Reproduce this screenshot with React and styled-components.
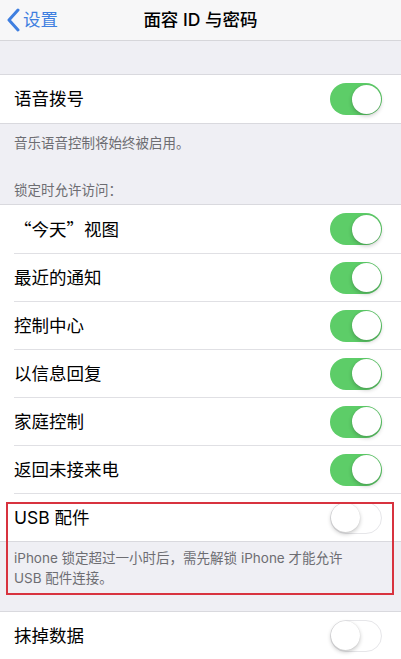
import styled, { createGlobalStyle } from "styled-components";

const GlobalStyle = createGlobalStyle`
  html, body {
    margin: 0;
    padding: 0;
    background: #efeff4;
  }
  body {
    font-family: "Inter", "Noto Sans CJK SC", sans-serif;
    -webkit-font-smoothing: antialiased;
  }
`;

const Page = styled.div`
  width: 401px;
  min-height: 659px;
  background: #efeff4;
  overflow: hidden;
`;

const NavBar = styled.div`
  height: 41px;
  background: #f7f7f8;
  border-bottom: 1px solid #d6d6da;
  display: grid;
  grid-template-columns: 80px 1fr 80px;
  align-items: center;
  box-sizing: border-box;
`;

const Back = styled.div`
  display: flex;
  align-items: center;
  gap: 3px;
  padding-left: 6px;
  color: #3f7fe0;
  font-size: 17.5px;
  line-height: 1;
`;

const Title = styled.div`
  text-align: center;
  font-size: 17.5px;
  font-weight: 500;
  color: #000;
  line-height: 1;
`;

const Spacer = styled.div`
  height: ${(p) => p.$h}px;
`;

const Group = styled.div`
  background: #fff;
  border-top: ${(p) => (p.$noTop ? "none" : "1px solid #d9d9de")};
  border-bottom: ${(p) => (p.$noBottom ? "none" : "1px solid #d9d9de")};
`;

const Row = styled.div`
  height: 48px;
  display: flex;
  align-items: center;
  justify-content: space-between;
  margin-left: 14px;
  padding-right: 19px;
  box-sizing: border-box;
  border-top: ${(p) => (p.$first ? "none" : "1px solid #e0e0e4")};
`;

/* CJK quote marks should stay full width, so those labels use Noto first */
const Label = styled.span`
  font-family: ${(p) =>
    p.$cjk ? '"Noto Sans CJK SC", sans-serif' : '"Inter", "Noto Sans CJK SC", sans-serif'};
  font-size: 17.5px;
  color: #000;
  line-height: 1;
`;

const Note = styled.div`
  padding: ${(p) => p.$pad || "9px 14px 0"};
  font-size: 13.5px;
  line-height: 20px;
  color: #6d6d72;
`;

const Header = styled.div`
  padding: 0 14px 4px;
  font-size: 13.5px;
  line-height: 20px;
  color: #6d6d72;
`;

const Track = styled.div`
  position: relative;
  width: 52px;
  height: 32px;
  border-radius: 16px;
  box-sizing: border-box;
  background: ${(p) => (p.$on ? "#5dcd68" : "#fff")};
  border: ${(p) => (p.$on ? "none" : "1.5px solid #e6e6e9")};
`;

const Knob = styled.div`
  position: absolute;
  top: ${(p) => (p.$on ? "1.5px" : "0")};
  left: ${(p) => (p.$on ? "21.5px" : "0")};
  width: 29px;
  height: 29px;
  border-radius: 50%;
  background: #fff;
  box-shadow: 0 2px 4px rgba(0, 0, 0, 0.22), 0 0 1px rgba(0, 0, 0, 0.15);
`;

/* red annotation frame drawn over the USB row and its note */
const Marked = styled.div`
  position: relative;
  &::after {
    content: "";
    position: absolute;
    left: 6px;
    right: 7px;
    top: 9px;
    bottom: 0;
    border: 2px solid #d8333f;
    pointer-events: none;
  }
`;

function Toggle({ on }) {
  return (
    <Track $on={on}>
      <Knob $on={on} />
    </Track>
  );
}

const lockItems = [
  "“今天”视图",
  "最近的通知",
  "控制中心",
  "以信息回复",
  "家庭控制",
  "返回未接来电",
];

export default function App() {
  return (
    <Page>
      <GlobalStyle />
      <NavBar>
        <Back>
          <svg width="14" height="24" viewBox="0 0 14 24">
            <path
              d="M12 2 L3 12 L12 22"
              fill="none"
              stroke="#3f7fe0"
              strokeWidth="3"
              strokeLinecap="round"
              strokeLinejoin="round"
            />
          </svg>
          设置
        </Back>
        <Title>面容 ID 与密码</Title>
        <div />
      </NavBar>

      <Spacer $h={33} />
      <Group>
        <Row $first>
          <Label>语音拨号</Label>
          <Toggle on />
        </Row>
      </Group>
      <Note>音乐语音控制将始终被启用。</Note>

      <Spacer $h={27} />
      <Header>锁定时允许访问：</Header>
      <Group $noBottom>
        {lockItems.map((t, i) => (
          <Row key={t} $first={i === 0}>
            <Label $cjk={i === 0}>{t}</Label>
            <Toggle on />
          </Row>
        ))}
      </Group>
      <Marked>
        <Group $noTop>
          <Row>
            <Label>USB 配件</Label>
            <Toggle />
          </Row>
        </Group>
        <Note $pad="6px 14px 7px">
          iPhone 锁定超过一小时后，需先解锁 iPhone 才能允许
          <br />
          USB 配件连接。
        </Note>
      </Marked>

      <Spacer $h={16} />
      <Group>
        <Row $first>
          <Label>抹掉数据</Label>
          <Toggle />
        </Row>
      </Group>
    </Page>
  );
}
